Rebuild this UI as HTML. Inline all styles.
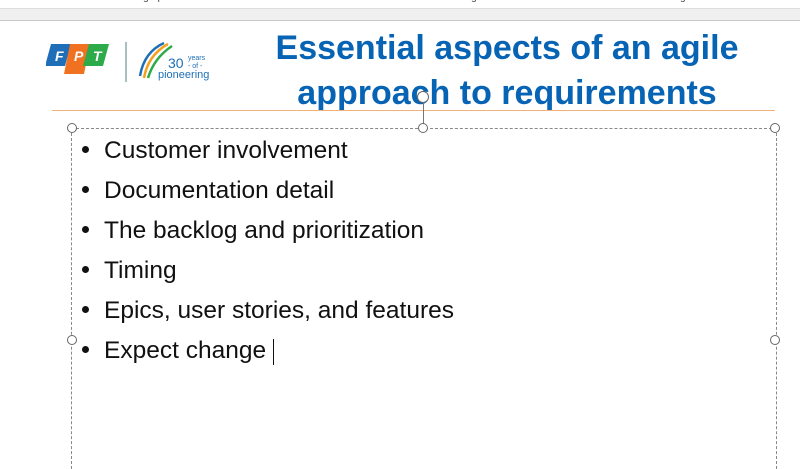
<!DOCTYPE html>
<html><head><style>
body{margin:0;width:800px;height:460px;overflow:hidden;background:#fff;position:relative;font-family:"Liberation Sans",sans-serif}
.rib{position:absolute;left:0;top:0;width:800px;height:8px;background:#fff;border-bottom:1px solid #ddd}
.rib span{position:absolute;top:-8px;font-size:10px;color:#444}
.band{position:absolute;left:0;top:9px;width:800px;height:11px;background:#f0f0f0;border-bottom:1px solid #c8c8c8}
.title{position:absolute;left:200px;width:614px;top:26px;text-align:center;color:#0763b4;font-weight:bold;font-size:34px;line-height:45px}
.hr{position:absolute;left:52px;top:110px;width:723px;height:1px;background:#f0b27a}
.box{position:absolute;left:71px;top:128px;width:704px;height:340px;border:1px dashed #888;border-bottom:none}
.h{position:absolute;width:8px;height:8px;border:1.5px solid #666;border-radius:50%;background:#fff}
ul{position:absolute;left:80px;top:131px;margin:0;padding:0;list-style:none;font-size:24.5px;color:#111}
li{height:40px;line-height:40px;padding-left:24px;position:relative}
li:before{content:"";position:absolute;left:2px;top:15px;width:7px;height:7px;border-radius:50%;background:#111}
</style></head><body>
<div class="rib"><span style="left:122px">Paragraph</span><span style="left:440px">Drawing</span><span style="left:655px">Editing</span><span style="left:733px">Voice</span><span style="left:780px">Add</span></div>
<div class="band"></div>
<svg style="position:absolute;left:46px;top:40px" width="180" height="45" viewBox="0 0 180 45">
<path d="M5 4 h20 l-6 22 h-20z" fill="#1e6fb8"/>
<path d="M24 4 h20 l-6 30 h-20z" fill="#f07120"/>
<path d="M43 4 h20 l-6 22 h-20z" fill="#2daa4a"/>
<text x="9" y="21" font-size="14" font-weight="bold" fill="#fff" font-style="italic">F</text>
<text x="28" y="21" font-size="14" font-weight="bold" fill="#fff" font-style="italic">P</text>
<text x="47" y="21" font-size="14" font-weight="bold" fill="#fff" font-style="italic">T</text>
<line x1="80" y1="2" x2="80" y2="42" stroke="#8aa" stroke-width="1.5"/>
<path d="M98 38 Q102 15 122 4" stroke="#f4a020" stroke-width="2.5" fill="none"/>
<path d="M102 38 Q108 18 126 6" stroke="#2daa4a" stroke-width="2.5" fill="none"/>
<path d="M94 36 Q98 12 118 3" stroke="#1e6fb8" stroke-width="2.5" fill="none"/>
<text x="122" y="28" font-size="14" fill="#1e6fb8">30</text>
<text x="142" y="20" font-size="7" fill="#1e6fb8">years</text>
<text x="142" y="28" font-size="7" fill="#1e6fb8">- of -</text>
<text x="112" y="38" font-size="11" fill="#1e6fb8">pioneering</text>
</svg>
<div class="title">Essential aspects of an agile<br>approach to requirements</div>
<div class="hr"></div>
<div class="box"></div>
<div style="position:absolute;left:423px;top:100px;width:1px;height:28px;background:#777"></div>
<div class="h" style="left:67px;top:123px"></div>
<div class="h" style="left:418px;top:123px"></div>
<div class="h" style="left:770px;top:123px"></div>
<div class="h" style="left:67px;top:335px"></div>
<div class="h" style="left:770px;top:335px"></div>
<div class="h" style="left:417px;top:91px;width:10px;height:10px"></div>
<ul>
<li>Customer involvement</li>
<li>Documentation detail</li>
<li>The backlog and prioritization</li>
<li>Timing</li>
<li>Epics, user stories, and features</li>
<li>Expect change <span style="display:inline-block;width:1px;height:26px;background:#111;vertical-align:middle"></span></li>
</ul>
</body></html>
